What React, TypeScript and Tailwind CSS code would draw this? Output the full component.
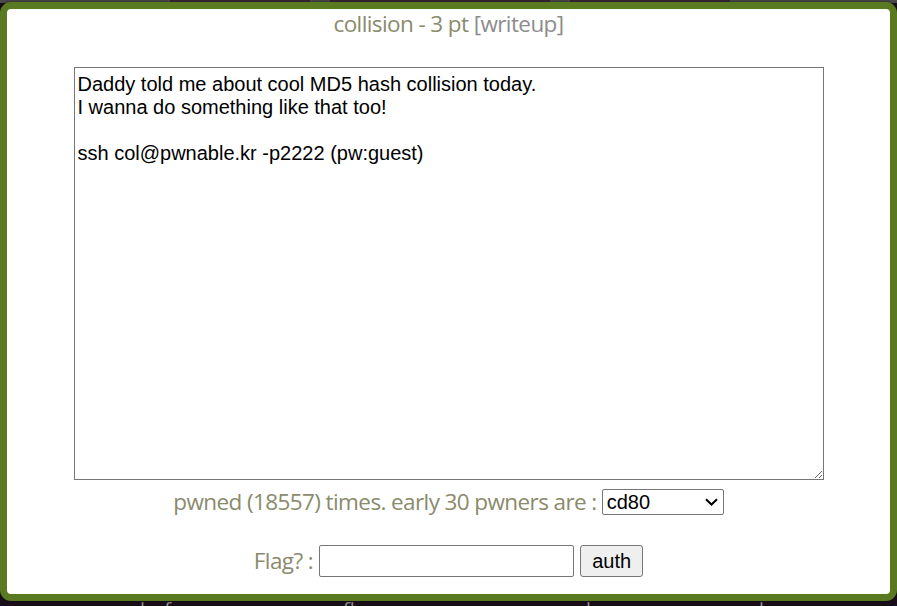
import React from "react";

export default function App() {
  const cal = { fontFamily: '"Open Sans", "Noto Sans", sans-serif' } as React.CSSProperties;
  const arial = { fontFamily: '"Liberation Sans", Arial, sans-serif' } as React.CSSProperties;
  return (
    <div className="relative w-[897px] h-[606px] overflow-hidden bg-[#1b0e1b]">
      {/* background page */}
      <div className="flex flex-col h-full">
        <div className="h-[3px] bg-[#4c4c4c] flex">
          <div className="ml-[170px] w-[140px] bg-[#3b2a3a]" />
          <div className="ml-[20px] w-[220px] bg-[#3a2838]" />
          <div className="ml-[20px] w-[160px] bg-[#3b2a3a]" />
        </div>
        <div className="flex-1" />
        <div
          className="flex h-[20px] -mb-[14px] text-[20px] leading-[20px] text-[#8f8f9c]"
          style={cal}
        >
          <span className="ml-[140px]">bof</span>
          <span className="ml-[172px]">flag</span>
          <span className="ml-[138px]">passcode</span>
          <span className="ml-[118px]">random</span>
        </div>
      </div>

      {/* dialog overlay */}
      <div className="absolute left-0 top-[2px] w-[897px] h-[599px] rounded-[11px] border-[7px] border-[#5a7a22] bg-white shadow-[0_0_4px_rgba(0,0,0,0.5)]">
        <div className="flex flex-col items-center h-full rounded-[6px] bg-white">
          <div className="h-[30px] text-[22.5px] leading-[30px] tracking-[-0.6px]" style={cal}>
            <span className="text-[#8a8a6c]">collision - 3 pt </span>
            <span className="text-[#8c8c8c]">[writeup]</span>
          </div>
          <textarea
            readOnly
            className="mt-[28px] w-[750px] h-[413px] border border-[#767676] px-[3px] pt-[5px] pb-[2px] text-[20px] leading-[23px] text-black outline-none"
            style={arial}
            defaultValue={
              "Daddy told me about cool MD5 hash collision today.\nI wanna do something like that too!\n\nssh col@pwnable.kr -p2222 (pw:guest)"
            }
          />
          <div className="mt-[9px] h-[26px] flex items-center gap-[5px]">
            <span className="text-[22.5px] leading-[26px] tracking-[-0.6px] text-[#8a8a6c]" style={cal}>
              pwned (18557) times. early 30 pwners are :
            </span>
            <div className="relative">
              <select
                className="appearance-none w-[122px] h-[26px] border border-[#767676] rounded-[2px] bg-white text-[20px] leading-[24px] text-black pl-[4px]"
                style={arial}
                defaultValue="cd80"
              >
                <option>cd80</option>
              </select>
              <svg
                className="absolute right-[6px] top-[9px] pointer-events-none"
                width="13"
                height="8"
                viewBox="0 0 13 8"
              >
                <path d="M1 1.2 L6.5 6.5 L12 1.2" fill="none" stroke="#000" strokeWidth="2" />
              </svg>
            </div>
          </div>
          <div className="mt-[30px] h-[32px] flex items-center">
            <span className="text-[22.5px] leading-[32px] tracking-[-0.6px] text-[#8a8a6c] mr-[6px]" style={cal}>
              Flag? :
            </span>
            <input
              type="text"
              className="w-[255px] h-[32px] border border-[#767676] rounded-[2px] bg-white outline-none"
            />
            <button
              className="ml-[6px] w-[63px] h-[32px] border border-[#767676] rounded-[3px] bg-[#efefef] text-[20px] text-black"
              style={arial}
            >
              auth
            </button>
          </div>
        </div>
      </div>
    </div>
  );
}
